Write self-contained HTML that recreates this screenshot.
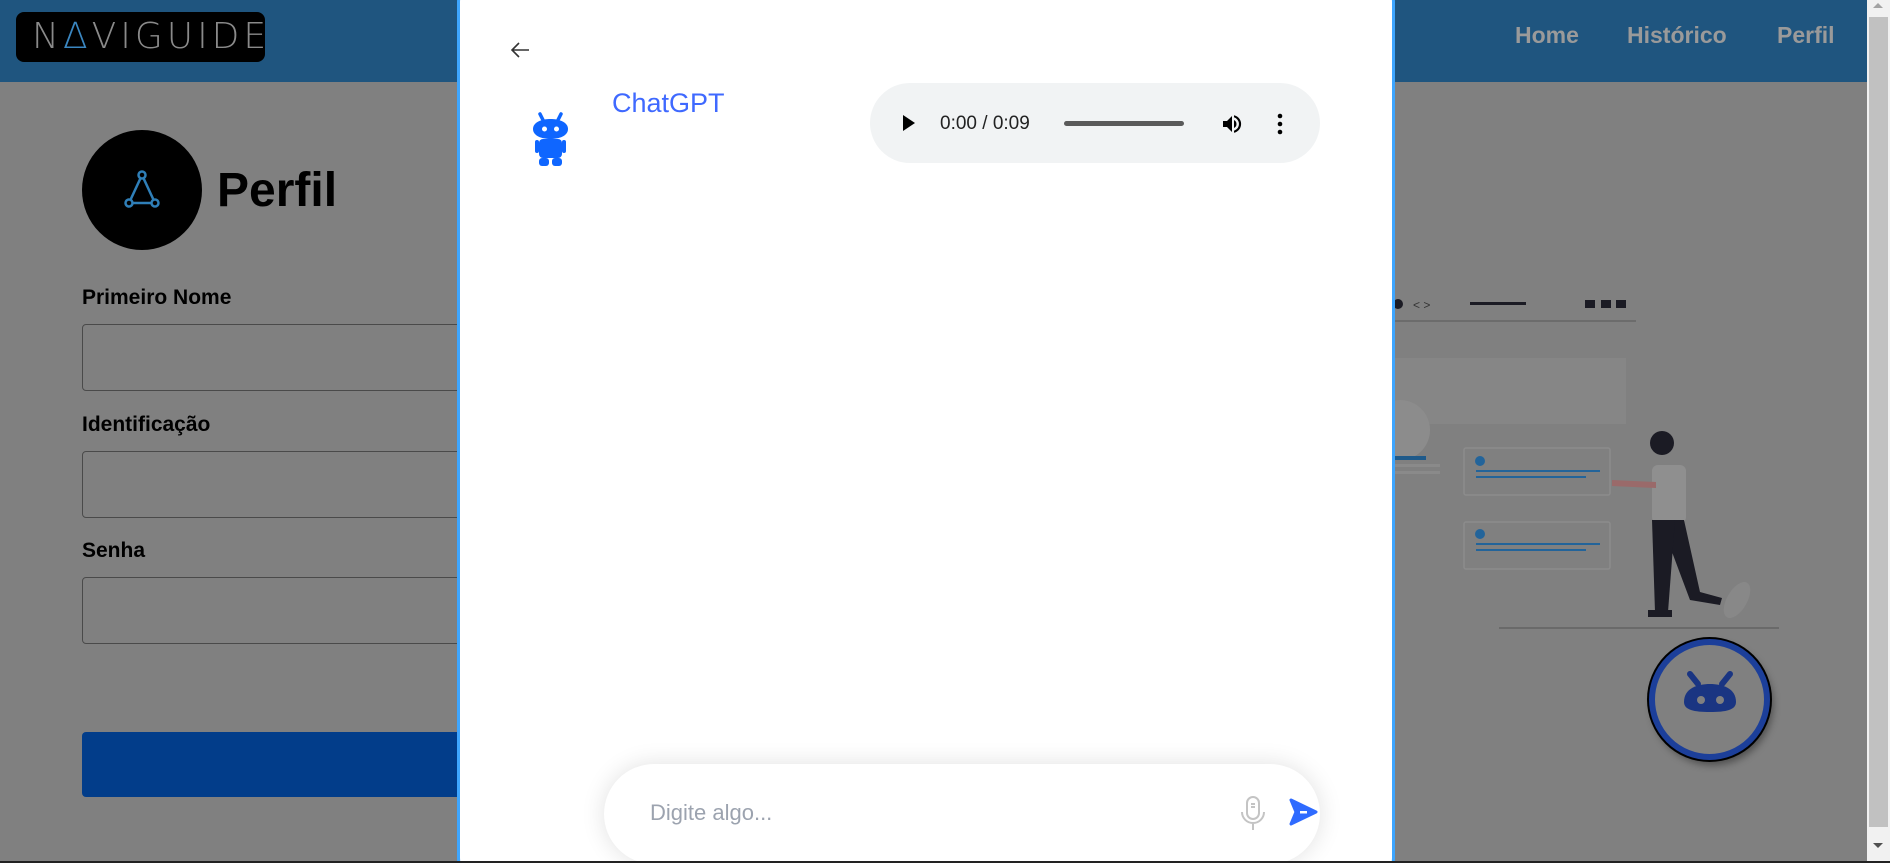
<!DOCTYPE html>
<html style="width:1890px;height:863px;overflow:hidden"><head><meta charset="utf-8"><style>
*{box-sizing:border-box;margin:0;padding:0}
body{width:1890px;height:863px;overflow:hidden;background:#808080;font-family:"Liberation Sans",Arial,sans-serif}
#w{position:relative;width:1890px;height:863px;overflow:hidden}
.abs{position:absolute}
.hdr{left:0;top:0;width:1867px;height:82px;background:#1f557f}
.logo{left:16px;top:12px;width:249px;height:50px;background:#000;border-radius:8px;color:#8a8a8a;font-size:36px;letter-spacing:4px;line-height:50px;padding-left:16px;font-family:"DejaVu Sans",sans-serif;font-weight:200}
.nav{top:22px;color:#9a9a9a;font-weight:bold;font-size:23px}
.lbl{left:82px;font-weight:bold;font-size:21px;color:#000}
.inp{left:82px;width:400px;height:67px;border:1px solid #4a4a4a;border-radius:4px}
.modal{left:457px;top:-20px;width:938px;height:900px;background:#fff;border:3px solid #3ea6ff;border-radius:22px}
.sb{left:1867px;top:0;width:23px;height:861px;background:#f1f1f1}
</style></head><body><div id="w">
<div class="abs hdr"></div>
<div class="abs logo">N<span style="color:#3a86c0">∆</span>VIGUIDE</div>
<div class="abs nav" style="left:1515px">Home</div>
<div class="abs nav" style="left:1627px">Histórico</div>
<div class="abs nav" style="left:1777px">Perfil</div>

<div class="abs" style="left:82px;top:130px;width:120px;height:120px;border-radius:50%;background:#000"></div>
<svg class="abs" style="left:117px;top:165px" width="50" height="50" viewBox="0 0 50 50"><g stroke="#2f7fb8" stroke-width="2.5" fill="none"><path d="M25 10 L12 38 L38 38 Z"/><circle cx="25" cy="10" r="3.5" fill="#000"/><circle cx="12" cy="38" r="3.5" fill="#000"/><circle cx="38" cy="38" r="3.5" fill="#000"/></g></svg>
<div class="abs" style="left:217px;top:163px;font-size:48px;font-weight:bold">Perfil</div>
<div class="abs lbl" style="top:286px">Primeiro Nome</div>
<div class="abs inp" style="top:324px"></div>
<div class="abs lbl" style="top:413px">Identificação</div>
<div class="abs inp" style="top:451px"></div>
<div class="abs lbl" style="top:539px">Senha</div>
<div class="abs inp" style="top:577px"></div>
<div class="abs" style="left:82px;top:732px;width:400px;height:65px;background:#023d8a;border-radius:4px"></div>

<svg class="abs" style="left:1390px;top:290px" width="400" height="360" viewBox="1390 290 400 360">
<circle cx="1398" cy="304" r="5" fill="#1b1b24"/>
<text x="1413" y="309" font-size="12" fill="#333" font-family="Liberation Sans">&lt; &gt;</text>
<rect x="1470" y="302" width="56" height="3" fill="#1b1b24"/>
<rect x="1585" y="300" width="10" height="8" fill="#1b1b24"/><rect x="1601" y="300" width="10" height="8" fill="#1b1b24"/><rect x="1616" y="300" width="10" height="8" fill="#1b1b24"/>
<rect x="1390" y="320" width="246" height="2" fill="#6c6c6c"/>
<rect x="1390" y="358" width="236" height="66" fill="#868686"/>
<circle cx="1400" cy="430" r="30" fill="#8c8c8c"/>
<rect x="1390" y="456" width="36" height="4" fill="#1f5a8a"/>
<rect x="1390" y="464" width="50" height="3" fill="#8a8a8a"/><rect x="1390" y="471" width="50" height="3" fill="#8a8a8a"/>
<g fill="none" stroke="#8c8c8c" stroke-width="1.5"><rect x="1464" y="448" width="146" height="47" rx="2"/><rect x="1464" y="522" width="146" height="47" rx="2"/></g>
<g fill="#23649a"><circle cx="1480" cy="461" r="5"/><rect x="1476" y="470" width="124" height="2"/><rect x="1476" y="476" width="110" height="2"/><circle cx="1480" cy="534" r="5"/><rect x="1476" y="543" width="124" height="2"/><rect x="1476" y="549" width="110" height="2"/></g>
<rect x="1499" y="627" width="280" height="2" fill="#6a6a6a"/>
<circle cx="1662" cy="443" r="12" fill="#1b1b24"/>
<rect x="1652" y="465" width="34" height="58" rx="6" fill="#8f8f8f"/>
<path d="M1612 480 L1656 482 L1656 488 L1612 486 Z" fill="#9a6a6a"/>
<path d="M1660 520 L1684 520 L1700 592 L1722 598 L1720 605 L1690 600 Z" fill="#1b1b24"/>
<path d="M1652 520 L1675 520 L1668 612 L1655 612 Z" fill="#1b1b24"/>
<rect x="1648" y="610" width="24" height="7" fill="#1b1b24"/>
<ellipse cx="1737" cy="600" rx="10" ry="20" fill="#888" transform="rotate(30 1737 600)"/>
</svg>

<div class="abs" style="left:1649px;top:639px;width:121px;height:121px;border-radius:50%;background:#808080;border:6px solid #1c3f9a;box-shadow:0 0 0 2px #000,3px 5px 8px rgba(0,0,0,.4)"></div>
<svg class="abs" style="left:1670px;top:666px" width="80" height="60" viewBox="0 0 80 60"><path d="M20 8 L28 18 M60 8 L52 18" stroke="#1a3582" stroke-width="6" stroke-linecap="round"/><path d="M14 36 C14 22 28 18 40 18 C52 18 66 22 66 36 C66 44 56 46 40 46 C24 46 14 44 14 36 Z" fill="#1a3582"/><circle cx="31" cy="34" r="4" fill="#808080"/><circle cx="50" cy="34" r="4" fill="#808080"/></svg>

<div class="abs sb"><div class="abs" style="left:2px;top:17px;width:19px;height:810px;background:#c1c1c1"></div>
<div class="abs" style="left:6px;top:3px;border:5px solid transparent;border-bottom-color:#a3a3a3;border-top:0"></div>
<div class="abs" style="left:6px;top:843px;border:5px solid transparent;border-top-color:#505050;border-bottom:0"></div></div>

<div class="abs modal"></div>
<svg class="abs" style="left:509px;top:41px" width="22" height="18" viewBox="0 0 22 18"><path d="M20 9 H3 M10 2 L3 9 L10 16" stroke="#333" stroke-width="1.6" fill="none"/></svg>
<svg class="abs" style="left:532px;top:112px" width="37" height="55" viewBox="0 0 37 55"><g fill="#0f66ff"><path d="M8 2 L12 10 M29 2 L25 10" stroke="#0f66ff" stroke-width="3.5" stroke-linecap="round"/><path d="M1 17 C1 10 10 7 18.5 7 C27 7 36 10 36 17 C36 24 27 27 18.5 27 C10 27 1 24 1 17Z"/><rect x="7" y="27" width="23" height="19" rx="4"/><rect x="3" y="28" width="4" height="13" rx="2"/><rect x="30" y="28" width="4" height="13" rx="2"/><rect x="7" y="46" width="10" height="8" rx="3"/><rect x="20" y="46" width="10" height="8" rx="3"/></g><circle cx="12.5" cy="17" r="2.5" fill="#fff"/><circle cx="24.5" cy="17" r="2.5" fill="#fff"/></svg>
<div class="abs" style="left:612px;top:88px;font-size:27px;color:#3f69ff">ChatGPT</div>

<div class="abs" style="left:870px;top:83px;width:450px;height:80px;border-radius:40px;background:#f1f3f4"></div>
<svg class="abs" style="left:902px;top:114px" width="14" height="18"><path d="M1 1 L13 9 L1 17Z" fill="#000"/></svg>
<div class="abs" style="left:940px;top:113px;font-size:19px;color:#222">0:00 / 0:09</div>
<div class="abs" style="left:1064px;top:121px;width:120px;height:5px;border-radius:3px;background:#5a5a5a"></div>
<svg class="abs" style="left:1220px;top:112px" width="24" height="24" viewBox="0 0 24 24"><path d="M3 9v6h4l5 5V4L7 9H3zm13.5 3A4.5 4.5 0 0 0 14 8v8a4.5 4.5 0 0 0 2.5-4zM14 3.2v2.1a7 7 0 0 1 0 13.4v2.1a9 9 0 0 0 0-17.6z" fill="#000"/></svg>
<svg class="abs" style="left:1276px;top:112px" width="8" height="24"><circle cx="4" cy="4" r="2.3"/><circle cx="4" cy="12" r="2.3"/><circle cx="4" cy="20" r="2.3"/></svg>

<div class="abs" style="left:604px;top:764px;width:716px;height:100px;border-radius:50px;background:#fff;box-shadow:0 0 24px rgba(0,0,0,.12)"></div>
<div class="abs" style="left:650px;top:800px;font-size:22px;color:#9ca3af">Digite algo...</div>
<svg class="abs" style="left:1240px;top:795px" width="26" height="36" viewBox="0 0 26 36"><g fill="none" stroke="#c4c4c4" stroke-width="2"><rect x="7" y="2" width="12" height="22" rx="6"/><path d="M2 17 a11 11 0 0 0 22 0 M13 28 V35 M11 9h4M11 12h4"/></g></svg>
<svg class="abs" style="left:1288px;top:797px" width="30" height="30" viewBox="0 0 30 30"><path d="M3 3 L28 15 L3 27 L8 15 Z" fill="#2f6bff" stroke="#2f6bff" stroke-width="3" stroke-linejoin="round"/><rect x="12" y="14" width="7" height="2.5" fill="#fff"/></svg>
<div class="abs" style="left:0;top:861px;width:1890px;height:2px;background:#222"></div>
</div></body></html>
